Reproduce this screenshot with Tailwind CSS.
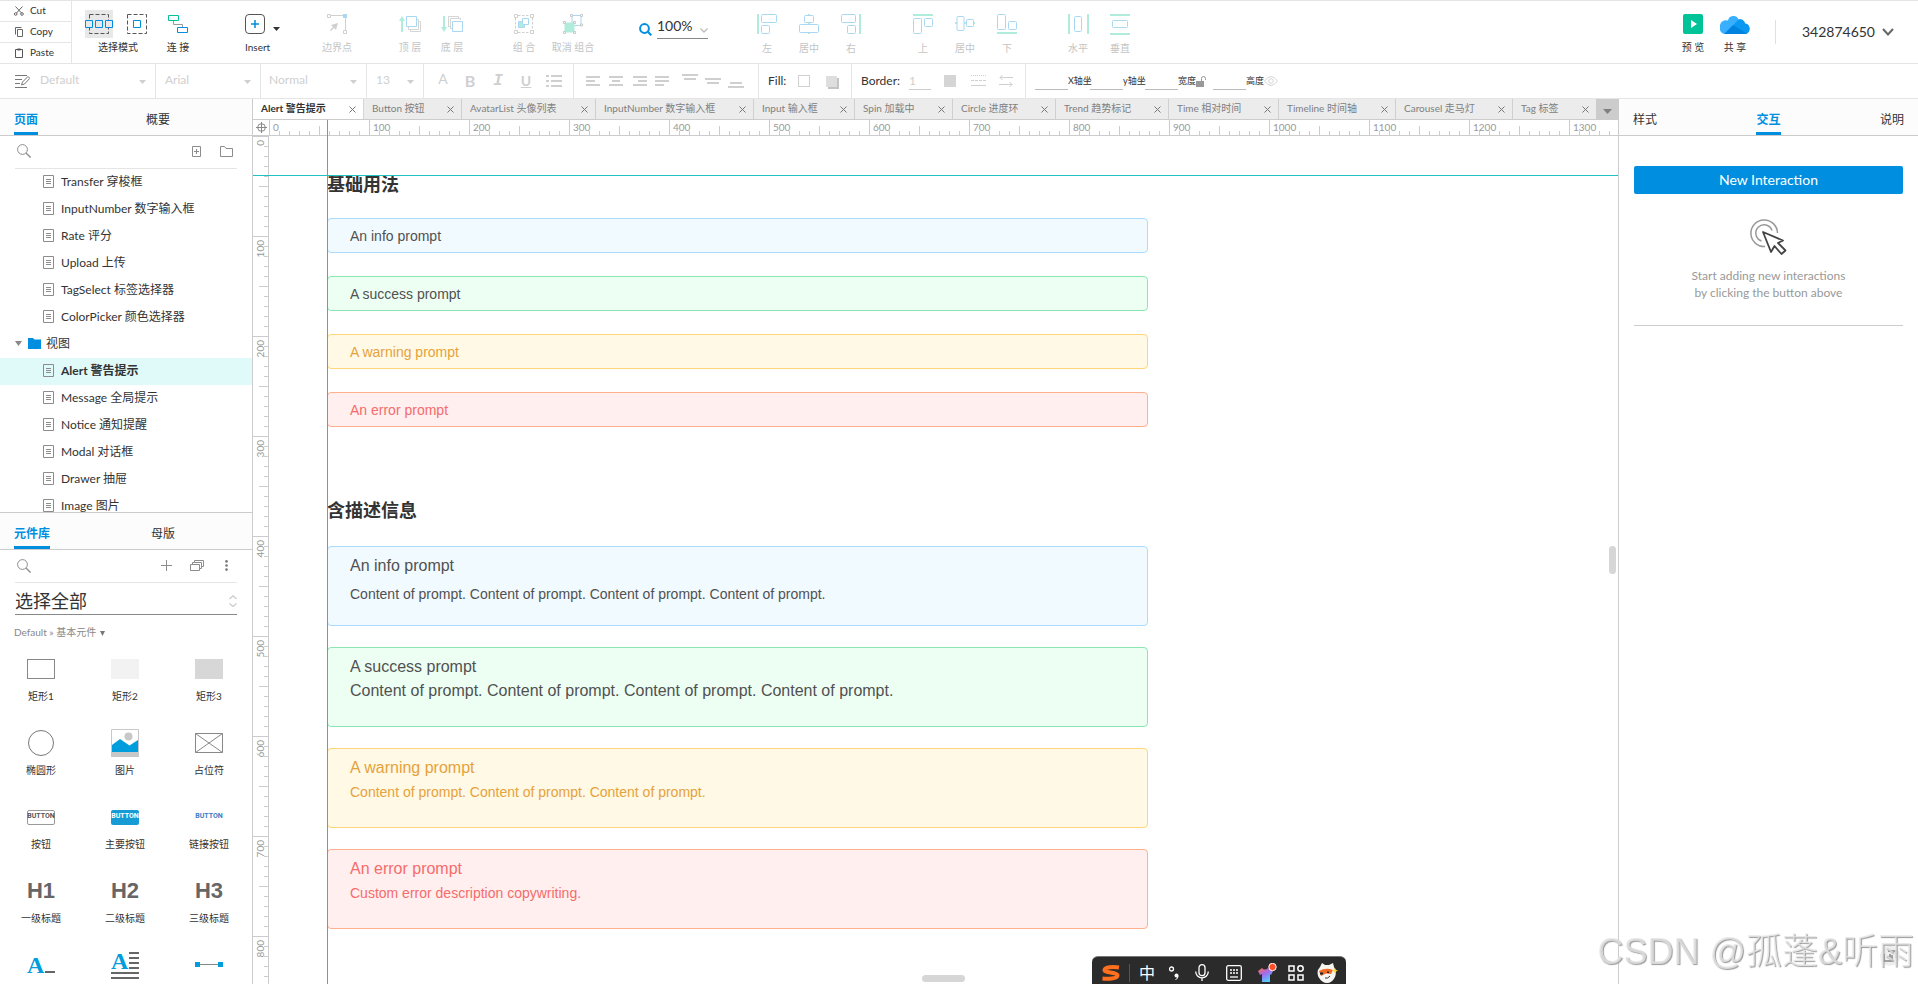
<!DOCTYPE html>
<html lang="zh-CN">
<head>
    <meta charset="UTF-8">
    <meta name="viewport" content="width=device-width, initial-scale=1.0">
    <title>Alert 警告提示</title>
    <script src="https://cdn.jsdelivr.net/npm/@tailwindcss/browser@4"></script>
</head>
<body class="h-screen flex flex-col overflow-hidden bg-white text-[#333] text-xs font-[Lato,'Noto_Sans_CJK_SC',sans-serif]">

    <!-- shared symbols -->
    <svg class="hidden">
        <symbol id="page" viewBox="0 0 11 13"><path d="M.5.5h10v12H.5zM3 4.5h5M3 6.5h5M3 8.5h5" fill="none" stroke="#8c8c8c"/></symbol>
        <symbol id="search" viewBox="0 0 14 14"><circle cx="5.5" cy="5.5" r="4.9" fill="none" stroke="#8c8c8c"/><path d="M9 9l4.6 4.6" stroke="#8c8c8c" stroke-width="1.3"/></symbol>
        <symbol id="close" viewBox="0 0 7 7"><path d="M.5.5l6 6M6.5.5l-6 6" stroke="#777" fill="none"/></symbol>
        <symbol id="caret" viewBox="0 0 7 4"><path d="M0 0h7L3.5 4z" fill="currentColor"/></symbol>
    </svg>

    <!-- top bar -->
    <header class="flex h-16 shrink-0 border-y border-[#e5e5e5] text-[10px] text-[#c4c4c4]">
        <div class="flex w-[72px] shrink-0 flex-col border-r border-[#e5e5e5] text-[#333]">
            <button class="flex h-[21px] items-center gap-1.5 border-b border-[#e5e5e5] pl-[14px]">
                <svg class="size-[10px]" viewBox="0 0 10 10" fill="none" stroke="#666"><path d="M1.5.5l6 6.5M8.5.5l-6 6.5"/><circle cx="1.7" cy="8" r="1.3"/><circle cx="8" cy="8" r="1.3"/></svg>Cut
            </button>
            <button class="flex h-[21px] items-center gap-1.5 border-b border-[#e5e5e5] pl-[14px]">
                <svg class="size-[10px]" viewBox="0 0 10 10" fill="none" stroke="#666"><path d="M3.5 2.5h5v7h-5zM1.5 7.500V.5h6"/></svg>Copy
            </button>
            <button class="flex h-5 items-center gap-1.5 pl-[14px]">
                <svg class="size-[10px]" viewBox="0 0 10 10" fill="none" stroke="#555"><path d="M1.500 1.500h7v8h-7z"/><path d="M3.500 1.500h3" stroke-width="2"/></svg>Paste
            </button>
        </div>

        <div class="ml-[13px] flex w-[66px] shrink-0 flex-col items-center pt-[9px] text-[#333]">
            <div class="flex w-full gap-2.5">
                <button class="grid size-7 place-items-center bg-[#e8e8e8]" aria-label="相交选择">
                    <svg class="h-5 w-7" viewBox="0 0 28 20" fill="none"><path d="M4.500.5h19v19h-19z" stroke="#555" stroke-dasharray="4 2"/><path d="M.5 6.500h7v7h-7zM10.500 6.500h7v7h-7zM20.500 6.500h7v7h-7z" stroke="#008fe0" fill="#e8e8e8"/></svg>
                </button>
                <button class="grid size-7 place-items-center" aria-label="包含选择">
                    <svg class="size-5" viewBox="0 0 20 20" fill="none"><path d="M.5.5h19v19H.5z" stroke="#555" stroke-dasharray="4 2"/><path d="M6.500 6.500h7v7h-7z" stroke="#008fe0"/></svg>
                </button>
            </div>
            <span class="mt-[3px] leading-3">选择模式</span>
        </div>
        <button class="ml-[6px] flex w-[42px] shrink-0 flex-col items-center pt-[9px] text-[#333]">
            <span class="grid h-7 place-items-center"><svg class="h-[19px] w-5" viewBox="0 0 20 19" fill="none"><path d="M5.500 6v3.500h9V12" stroke="#999"/><path d="M.5.5h10v5H.5z" stroke="#00c398"/><path d="M9.500 12.500h10v5h-10z" stroke="#008fe0"/></svg></span>
            <span class="mt-[3px] leading-3">连 接</span>
        </button>

        <button class="ml-[46px] flex w-[34px] shrink-0 flex-col items-start pt-[9px] text-[#333]">
            <span class="flex h-7 items-center gap-2">
                <svg class="size-5" viewBox="0 0 20 20" fill="none"><rect x=".5" y=".5" width="19" height="19" rx="3.500" stroke="#555"/><path d="M10 6v8M6 10h8" stroke="#008fe0" stroke-width="1.500"/></svg>
                <svg class="mt-2.5 h-1 w-[7px]"><use href="#caret"/></svg>
            </span>
            <span class="mt-[3px] leading-3">Insert</span>
        </button>

        <button class="ml-[37px] flex w-[42px] shrink-0 flex-col items-center pt-[9px]" disabled>
            <span class="grid h-7 place-items-center"><svg class="size-5" viewBox="0 0 20 20" fill="none" stroke="#d0d0d0"><path d="M4 1.500h12M18.500 4v12"/><path d="M.5.5h3v3h-3zM16.500 16.500h3v3h-3z"/><path d="M16 0h4v4h-4z" fill="#a9d8f5" stroke="none"/><path d="M11 9l-2 7-2-2-3 3-1-1 3-3-2-2z" fill="#d0d0d0" stroke="none"/></svg></span>
            <span class="mt-[3px] leading-3">边界点</span>
        </button>

        <div class="ml-[31px] flex shrink-0">
            <button class="flex w-[42px] flex-col items-center pt-[9px]" disabled>
                <span class="grid h-7 place-items-center"><svg class="h-[18px] w-[22px]" viewBox="0 0 22 18" fill="none"><path d="M3 17V4" stroke="#b0ecdc" stroke-width="2"/><path d="M0 6l3-5 3 5z" fill="#b0ecdc"/><path d="M11.500 14v2.500h10v-10H20M9.500 12v2.500h10v-10H18" stroke="#d5d5d5"/><path d="M7.500 1.500h10v10h-10z" stroke="#a9d8f5"/></svg></span>
                <span class="mt-[3px] leading-3">顶 层</span>
            </button>
            <button class="flex w-[42px] flex-col items-center pt-[9px]" disabled>
                <span class="grid h-7 place-items-center"><svg class="h-[18px] w-[22px]" viewBox="0 0 22 18" fill="none"><path d="M3 1v13" stroke="#b0ecdc" stroke-width="2"/><path d="M0 12l3 5 3-5z" fill="#b0ecdc"/><path d="M9 11.500H7.500v-10h10V3M11 13.500H9.500v-10h10V5" stroke="#d5d5d5"/><path d="M11.500 6.500h10v10h-10z" stroke="#a9d8f5"/></svg></span>
                <span class="mt-[3px] leading-3">底 层</span>
            </button>
        </div>

        <div class="ml-[30px] flex shrink-0">
            <button class="flex w-[42px] flex-col items-center pt-[9px]" disabled>
                <span class="grid h-7 place-items-center"><svg class="size-5" viewBox="0 0 20 20" fill="none"><path d="M4 1.500h12M4 18.500h12M1.500 4v12M18.500 4v12" stroke="#d0d0d0" stroke-dasharray="2.500 1.500"/><path d="M.5.5h3v3h-3zM16.500.5h3v3h-3zM.5 16.500h3v3h-3zM16.500 16.500h3v3h-3z" stroke="#d0d0d0"/><path d="M4.500 7.500h6v6h-6z" fill="#b0ecdc" stroke="#a9d8f5"/><path d="M8.500 4.500h6v6h-6z" fill="#fff" stroke="#a9d8f5"/></svg></span>
                <span class="mt-[3px] leading-3">组 合</span>
            </button>
            <button class="flex w-[56px] flex-col items-center pt-[9px]" disabled>
                <span class="grid h-7 place-items-center"><svg class="size-5" viewBox="0 0 20 20" fill="none"><path d="M9 1.500h9v10H9z" stroke="#a9d8f5"/><path d="M1.500 8.500h10v10h-10z" fill="#b0ecdc"/><path d="M7.500.5h2v2h-2zM17.500.5h2v2h-2zM17.500 10h2v2h-2zM.5 7.500h2v2h-2zM10.500 7.500h2v2h-2zM.5 17.500h2v2h-2zM10.500 17.500h2v2h-2z" fill="#fff" stroke="#c8c8c8"/></svg></span>
                <span class="mt-[3px] leading-3">取消 组合</span>
            </button>
        </div>

        <label class="ml-[38px] flex shrink-0 items-start gap-[5px] pt-[14px]">
            <svg class="mt-[8px] size-[13px]" viewBox="0 0 13 13" fill="none" stroke="#008fe0" stroke-width="2"><circle cx="5.500" cy="5.500" r="4.400"/><path d="M8.800 8.800l3.500 3.500"/></svg>
            <span class="flex w-[51px] items-center border-b border-[#888]">
                <input class="h-[23px] w-[43px] pb-0.5 text-sm text-[#333] outline-none" value="100%" aria-label="缩放">
                <svg class="mt-2 h-[5px] w-2" viewBox="0 0 8 5" fill="none" stroke="#bbb" stroke-width="1.300"><path d="M.5.5L4 4 7.500.5"/></svg>
            </span>
        </label>

        <div class="ml-[38px] flex shrink-0">
            <button class="flex w-[42px] flex-col items-center pt-[9px]" disabled>
                <span class="grid h-7 place-items-center"><svg class="size-5" viewBox="0 0 20 20" fill="none" stroke="#a9d8f5"><path d="M1 0v20" stroke="#b0ecdc" stroke-width="2"/><rect x="4.500" y=".5" width="15" height="8" rx="1"/><rect x="4.500" y="11.500" width="8" height="8" rx="1"/></svg></span>
                <span class="mt-1 leading-3">左</span>
            </button>
            <button class="flex w-[42px] flex-col items-center pt-[9px]" disabled>
                <span class="grid h-7 place-items-center"><svg class="size-5" viewBox="0 0 20 20" fill="none" stroke="#a9d8f5"><path d="M10-1v3M10 8v3M10 18v3" stroke="#b0ecdc" stroke-width="2"/><rect x="5.500" y="1.500" width="9" height="7" rx="1"/><rect x=".5" y="10.500" width="19" height="8" rx="1"/></svg></span>
                <span class="mt-1 leading-3">居中</span>
            </button>
            <button class="flex w-[42px] flex-col items-center pt-[9px]" disabled>
                <span class="grid h-7 place-items-center"><svg class="size-5" viewBox="0 0 20 20" fill="none" stroke="#a9d8f5"><path d="M19 0v20" stroke="#b0ecdc" stroke-width="2"/><rect x=".5" y=".5" width="14" height="8" rx="1"/><rect x="6.500" y="11.500" width="8" height="8" rx="1"/></svg></span>
                <span class="mt-1 leading-3">右</span>
            </button>
        </div>
        <div class="ml-[30px] flex shrink-0">
            <button class="flex w-[42px] flex-col items-center pt-[9px]" disabled>
                <span class="grid h-7 place-items-center"><svg class="size-5" viewBox="0 0 20 20" fill="none" stroke="#a9d8f5"><path d="M0 1h20" stroke="#b0ecdc" stroke-width="2"/><rect x=".5" y="4.500" width="8" height="15" rx="1"/><rect x="11.500" y="4.500" width="8" height="8" rx="1"/></svg></span>
                <span class="mt-1 leading-3">上</span>
            </button>
            <button class="flex w-[42px] flex-col items-center pt-[9px]" disabled>
                <span class="grid h-7 place-items-center"><svg class="size-5" viewBox="0 0 20 20" fill="none" stroke="#a9d8f5"><path d="M-1 9h3M9 9h3M18 9h3" stroke="#b0ecdc" stroke-width="2"/><rect x="2" y="2.500" width="7" height="14" rx="1"/><rect x="11.500" y="5.500" width="7" height="7" rx="1"/></svg></span>
                <span class="mt-1 leading-3">居中</span>
            </button>
            <button class="flex w-[42px] flex-col items-center pt-[9px]" disabled>
                <span class="grid h-7 place-items-center"><svg class="size-5" viewBox="0 0 20 20" fill="none" stroke="#a9d8f5"><path d="M0 19h20" stroke="#b0ecdc" stroke-width="2"/><rect x=".5" y=".5" width="8" height="15" rx="1"/><rect x="11.500" y="7.500" width="8" height="8" rx="1"/></svg></span>
                <span class="mt-1 leading-3">下</span>
            </button>
        </div>
        <div class="ml-[29px] flex shrink-0">
            <button class="flex w-[42px] flex-col items-center pt-[9px]" disabled>
                <span class="grid h-7 place-items-center"><svg class="h-5 w-[21px]" viewBox="0 0 21 20" fill="none" stroke="#a9d8f5"><path d="M1 0v20M20 0v20" stroke="#b0ecdc" stroke-width="2"/><rect x="6.500" y="2.500" width="7" height="15" rx="1"/></svg></span>
                <span class="mt-1 leading-3">水平</span>
            </button>
            <button class="flex w-[42px] flex-col items-center pt-[9px]" disabled>
                <span class="grid h-7 place-items-center"><svg class="h-[21px] w-5" viewBox="0 0 20 21" fill="none" stroke="#a9d8f5"><path d="M0 1h20M0 20h20" stroke="#b0ecdc" stroke-width="2"/><rect x="2.500" y="6.500" width="15" height="7" rx="1"/></svg></span>
                <span class="mt-1 leading-3">垂直</span>
            </button>
        </div>

        <div class="ml-auto flex shrink-0 text-[#333]">
            <button class="flex w-[42px] flex-col items-center pt-[9px]">
                <span class="grid h-7 place-items-center"><svg class="size-5" viewBox="0 0 20 20"><rect width="20" height="20" rx="2" fill="#00c398"/><path d="M8 6l6 4-6 4z" fill="#fff"/></svg></span>
                <span class="mt-[3px] leading-3">预 览</span>
            </button>
            <button class="flex w-[42px] flex-col items-center pt-[9px]">
                <span class="grid h-7 place-items-center"><svg class="h-[19px] w-[30px]" viewBox="0 0 30 19"><path d="M5 19a5.500 5.500 0 0 1-5-7A6 6 0 0 1 8 5.500 5.500 5.500 0 0 1 18.500 4.500a5 5 0 0 1 6.500 4A5.300 5.300 0 0 1 25 19z" fill="#38b0ff"/><path d="M13 10.500L18.500 4.500a5 5 0 0 1 6.500 4A5.300 5.300 0 0 1 25 19z" fill="#0a98f0"/><path d="M13 10l14 8.500-2 .5H4z" fill="#0083e0"/></svg></span>
                <span class="mt-[3px] leading-3">共 享</span>
            </button>
            <div class="ml-[19px] mt-[19px] h-6 border-l border-[#e0e0e0]"></div>
            <button class="ml-[26px] mr-6 flex h-[62px] items-center gap-[7px] text-sm">
                342874650
                <svg class="h-2 w-3" viewBox="0 0 12 8" fill="none" stroke="#666" stroke-width="2"><path d="M1 1l5 5.500L11 1"/></svg>
            </button>
        </div>
    </header>

    <!-- format bar -->
    <div class="flex h-[35px] shrink-0 border-b border-[#e5e5e5] text-[#cfcfcf]">
        <label class="flex w-[156px] shrink-0 items-center border-r border-[#e5e5e5] pl-[15px] pr-[9px]">
            <svg class="mr-[10px] h-[14px] w-[15px] shrink-0" viewBox="0 0 15 14" fill="none" stroke="#777"><path d="M0 1.500h12M0 5.500h7M0 9.500h5M0 13.500h12"/><path d="M6.500 11l1-3L13 2.500l1.800 1.800L9.500 10z"/></svg>
            <select class="min-w-0 flex-1 appearance-none pb-0.5 outline-none" aria-label="样式"><option>Default</option></select>
            <svg class="mt-0.5 h-1 w-[7px]"><use href="#caret"/></svg>
        </label>
        <label class="flex w-[105px] shrink-0 items-center border-r border-[#e5e5e5] px-[9px]">
            <select class="min-w-0 flex-1 appearance-none pb-0.5 outline-none" aria-label="字体"><option>Arial</option></select>
            <svg class="mt-0.5 h-1 w-[7px]"><use href="#caret"/></svg>
        </label>
        <label class="flex w-[106px] shrink-0 items-center border-r border-[#e5e5e5] pl-2 pr-[9px]">
            <select class="min-w-0 flex-1 appearance-none pb-0.5 outline-none" aria-label="字重"><option>Normal</option></select>
            <svg class="mt-0.5 h-1 w-[7px]"><use href="#caret"/></svg>
        </label>
        <label class="flex w-[57px] shrink-0 items-center border-r border-[#e5e5e5] px-[9px]">
            <select class="min-w-0 flex-1 appearance-none pb-0.5 outline-none" aria-label="字号"><option>13</option></select>
            <svg class="mt-0.5 h-1 w-[7px]"><use href="#caret"/></svg>
        </label>
        <div class="flex w-[150px] shrink-0 items-center border-r border-[#e5e5e5] pl-[13px] text-sm">
            <button class="w-3 pb-1" disabled>A</button>
            <button class="ml-[15px] w-3 text-base font-bold" disabled>B</button>
            <button class="ml-4 w-3 font-mono text-base font-bold italic" disabled>I</button>
            <button class="ml-4 w-3 font-bold underline" disabled>U</button>
            <button class="ml-[14px]" aria-label="列表" disabled><svg class="h-3 w-4" viewBox="0 0 16 12" stroke="currentColor" stroke-width="2"><path d="M0 1h3M5 1h11M0 6h3M5 6h11M0 11h3M5 11h11"/></svg></button>
        </div>
        <div class="flex w-[185px] shrink-0 items-center border-r border-[#e5e5e5] pl-3">
            <button aria-label="左对齐" disabled><svg class="h-[10px] w-[14px]" viewBox="0 0 14 10" stroke="currentColor" stroke-width="2"><path d="M0 1h14M0 5h9M0 9h14"/></svg></button>
            <button class="ml-[9px]" aria-label="居中对齐" disabled><svg class="h-[10px] w-[14px]" viewBox="0 0 14 10" stroke="currentColor" stroke-width="2"><path d="M0 1h14M3 5h8M0 9h14"/></svg></button>
            <button class="ml-[10px]" aria-label="右对齐" disabled><svg class="h-[10px] w-[14px]" viewBox="0 0 14 10" stroke="currentColor" stroke-width="2"><path d="M0 1h14M5 5h9M0 9h14"/></svg></button>
            <button class="ml-2" aria-label="两端对齐" disabled><svg class="h-[10px] w-[14px]" viewBox="0 0 14 10" stroke="currentColor" stroke-width="2"><path d="M0 1h14M0 5h14M0 9h9"/></svg></button>
            <button class="ml-[13px]" aria-label="顶部" disabled><svg class="h-[14px] w-4" viewBox="0 0 16 14" stroke="currentColor" stroke-width="2"><path d="M0 1h16M2 5h12"/></svg></button>
            <button class="ml-[7px]" aria-label="中部" disabled><svg class="h-[14px] w-4" viewBox="0 0 16 14" stroke="currentColor" stroke-width="2"><path d="M0 5h16M2 9h12"/></svg></button>
            <button class="ml-[7px]" aria-label="底部" disabled><svg class="h-[14px] w-4" viewBox="0 0 16 14" stroke="currentColor" stroke-width="2"><path d="M2 9h12M0 13h16"/></svg></button>
        </div>
        <div class="flex w-[93px] shrink-0 items-center border-r border-[#e5e5e5] pl-[9px]">
            <span class="w-[30px] text-[#333]">Fill:</span>
            <button class="size-3 border border-[#d0d0d0]" aria-label="填充颜色"></button>
            <button class="ml-4 size-[11px] bg-[#dedede] shadow-[2px_2px_0_#c4c4c4]" aria-label="阴影"></button>
        </div>
        <div class="flex w-[174px] shrink-0 items-center border-r border-[#e5e5e5] pl-[9px]">
            <label for="border-width" class="w-12 text-[#333]">Border:</label>
            <input id="border-width" class="h-[18px] w-[22px] border-b border-[#ccc] outline-none" value="1">
            <button class="ml-[13px] size-3 bg-[#d5d5d5]" aria-label="边框颜色"></button>
            <button class="ml-[15px]" aria-label="线段样式" disabled><svg class="h-3 w-[15px]" viewBox="0 0 15 12" stroke="currentColor"><path d="M0 .5h15" stroke-dasharray="1 1"/><path d="M0 5.500h15" stroke-dasharray="3 1"/><path d="M0 10.500h15"/></svg></button>
            <button class="ml-[13px]" aria-label="箭头样式" disabled><svg class="h-3 w-[14px]" viewBox="0 0 14 12" fill="none" stroke="currentColor"><path d="M14 2.500H1M3.500 0L1 2.500 3.500 5M0 9.500h13M10.500 7L13 9.500 10.500 12"/></svg></button>
        </div>
        <div class="flex shrink-0 items-center pl-[9px] text-[9px] text-[#333]">
            <label class="flex w-[55px] items-center"><input class="h-[18px] w-[33px] shrink-0 border-b border-[#bbb] outline-none"><span class="whitespace-nowrap">X轴坐</span></label>
            <label class="flex w-[55px] items-center"><input class="h-[18px] w-[33px] shrink-0 border-b border-[#bbb] outline-none"><span class="whitespace-nowrap">y轴坐</span></label>
            <label class="flex w-[51px] items-center"><input class="h-[18px] w-[33px] shrink-0 border-b border-[#bbb] outline-none">宽度</label>
            <button aria-label="锁定比例"><svg class="h-[11px] w-[10px]" viewBox="0 0 10 11"><path d="M0 5h8v6H0z" fill="#999"/><path d="M5.500 5V2.500a2 2 0 0 1 4 0V4" fill="none" stroke="#999"/></svg></button>
            <label class="ml-[7px] flex w-[51px] items-center"><input class="h-[18px] w-[33px] shrink-0 border-b border-[#bbb] outline-none">高度</label>
            <button aria-label="可见性"><svg class="h-[10px] w-[14px]" viewBox="0 0 14 10" fill="none" stroke="#d5d5d5"><path d="M.5 5Q7-4 13.500 5 7 14 .5 5z"/><circle cx="7" cy="5" r="2.300"/></svg></button>
        </div>
    </div>

    <div class="flex min-h-0 flex-1">
        <!-- left panel -->
        <aside class="flex w-[253px] shrink-0 flex-col border-r border-[#ccc]">
            <div class="flex h-[37px] shrink-0 border-b border-[#ccc] bg-[#fcfcfc] pl-[14px]">
                <button class="flex items-center border-b-[3px] border-[#008fe0] pt-2 font-bold text-[#008fe0]">页面</button>
                <button class="ml-[108px] flex items-center border-b-[3px] border-transparent pt-2">概要</button>
            </div>
            <div class="mx-[15px] flex h-[33px] shrink-0 items-center border-b border-[#e5e5e5] pb-0.5 pl-0.5 pr-1">
                <button aria-label="搜索页面"><svg class="size-[14px]"><use href="#search"/></svg></button>
                <button class="ml-auto" aria-label="添加页面"><svg class="h-[11px] w-[9px]" viewBox="0 0 9 11" fill="none" stroke="#8c8c8c"><path d="M.5.5h8v10h-8zM2 5.500h5M4.500 3v5"/></svg></button>
                <button class="ml-[19px]" aria-label="添加文件夹"><svg class="h-[11px] w-[13px]" viewBox="0 0 13 11" fill="none" stroke="#8c8c8c"><path d="M.5 10.500V.5h4l1.500 2h6.500v8z"/></svg></button>
            </div>
            <div id="pages" class="h-[343px] shrink-0 overflow-hidden">
                <a href="#" class="flex h-[27px] items-center gap-[7px] pb-0.5 pl-[43px]"><svg class="h-[13px] w-[11px]"><use href="#page"/></svg>Transfer 穿梭框</a>
                <a href="#" class="flex h-[27px] items-center gap-[7px] pb-0.5 pl-[43px]"><svg class="h-[13px] w-[11px]"><use href="#page"/></svg>InputNumber 数字输入框</a>
                <a href="#" class="flex h-[27px] items-center gap-[7px] pb-0.5 pl-[43px]"><svg class="h-[13px] w-[11px]"><use href="#page"/></svg>Rate 评分</a>
                <a href="#" class="flex h-[27px] items-center gap-[7px] pb-0.5 pl-[43px]"><svg class="h-[13px] w-[11px]"><use href="#page"/></svg>Upload 上传</a>
                <a href="#" class="flex h-[27px] items-center gap-[7px] pb-0.5 pl-[43px]"><svg class="h-[13px] w-[11px]"><use href="#page"/></svg>TagSelect 标签选择器</a>
                <a href="#" class="flex h-[27px] items-center gap-[7px] pb-0.5 pl-[43px]"><svg class="h-[13px] w-[11px]"><use href="#page"/></svg>ColorPicker 颜色选择器</a>
                <a href="#" class="flex h-[27px] items-center pb-0.5 pl-[15px]">
                    <svg class="h-[5px] w-[7px] text-[#888]" viewBox="0 0 7 5"><path d="M0 0h7L3.500 5z" fill="currentColor"/></svg>
                    <svg class="ml-1.5 mr-[5px] h-[11px] w-[13px]" viewBox="0 0 13 11"><path d="M0 0h5l1.500 1.500H13V11H0z" fill="#008fe0"/></svg>视图
                </a>
                <a href="#" class="flex h-[27px] items-center gap-[7px] bg-[#e0fafa] pb-0.5 pl-[43px] font-bold"><svg class="h-[13px] w-[11px]"><use href="#page"/></svg>Alert 警告提示</a>
                <a href="#" class="flex h-[27px] items-center gap-[7px] pb-0.5 pl-[43px]"><svg class="h-[13px] w-[11px]"><use href="#page"/></svg>Message 全局提示</a>
                <a href="#" class="flex h-[27px] items-center gap-[7px] pb-0.5 pl-[43px]"><svg class="h-[13px] w-[11px]"><use href="#page"/></svg>Notice 通知提醒</a>
                <a href="#" class="flex h-[27px] items-center gap-[7px] pb-0.5 pl-[43px]"><svg class="h-[13px] w-[11px]"><use href="#page"/></svg>Modal 对话框</a>
                <a href="#" class="flex h-[27px] items-center gap-[7px] pb-0.5 pl-[43px]"><svg class="h-[13px] w-[11px]"><use href="#page"/></svg>Drawer 抽屉</a>
                <a href="#" class="flex h-[27px] items-center gap-[7px] pb-0.5 pl-[43px]"><svg class="h-[13px] w-[11px]"><use href="#page"/></svg>Image 图片</a>
            </div>

            <div class="flex h-[38px] shrink-0 border-y border-[#ccc] bg-[#fcfcfc] pl-[14px]">
                <button class="flex items-center border-b-[3px] border-[#008fe0] pt-2 font-bold text-[#008fe0]">元件库</button>
                <button class="ml-[101px] flex items-center border-b-[3px] border-transparent pt-2">母版</button>
            </div>
            <div class="mx-[15px] flex h-[33px] shrink-0 items-center border-b border-[#e5e5e5] pb-px pl-0.5 pr-2">
                <button aria-label="搜索元件"><svg class="size-[14px]"><use href="#search"/></svg></button>
                <button class="ml-auto" aria-label="添加"><svg class="size-[11px]" viewBox="0 0 11 11" stroke="#8c8c8c"><path d="M5.500 0v11M0 5.500h11"/></svg></button>
                <button class="ml-[18px]" aria-label="管理"><svg class="h-[11px] w-[14px]" viewBox="0 0 14 11" fill="none" stroke="#8c8c8c"><path d="M.5 4.500h9v6h-9zM2.500 4V2.500h9v6H10M4.500 2V.5h9v6H12"/></svg></button>
                <button class="ml-5" aria-label="更多"><svg class="h-[11px] w-[5px]" viewBox="0 0 5 11" fill="#777"><circle cx="2.500" cy="1.400" r="1.300"/><circle cx="2.500" cy="5.500" r="1.300"/><circle cx="2.500" cy="9.600" r="1.300"/></svg></button>
            </div>
            <label class="mx-[15px] mt-1 flex h-7 shrink-0 items-center border-b border-[#888]">
                <select class="flex-1 appearance-none text-lg leading-6 outline-none" aria-label="元件库"><option>选择全部</option></select>
                <svg class="h-3 w-2" viewBox="0 0 8 12" fill="none" stroke="#ccc" stroke-width="1.300"><path d="M.5 4L4 .8 7.500 4M.5 8.500L4 11.500 7.500 8.500"/></svg>
            </label>
            <button class="mt-2.5 flex h-4 shrink-0 items-center gap-1 pl-[14px] text-[10px] text-[#888]">Default » 基本元件 <svg class="h-[5px] w-[5px]" viewBox="0 0 5 5"><path d="M0 0h5L2.500 5z" fill="#777"/></svg></button>

            <div class="mt-[14px] grid min-h-0 flex-1 auto-rows-[48px] grid-cols-[82px_86px_82px] gap-y-[26px] overflow-hidden text-[10px]">
                <figure class="flex flex-col items-center">
                    <div class="grid h-7 place-items-center"><div class="h-5 w-7 border border-[#888]"></div></div>
                    <figcaption class="mt-1.5 leading-[14px]">矩形1</figcaption>
                </figure>
                <figure class="flex flex-col items-center">
                    <div class="grid h-7 place-items-center"><div class="h-5 w-7 bg-[#f2f2f2]"></div></div>
                    <figcaption class="mt-1.5 leading-[14px]">矩形2</figcaption>
                </figure>
                <figure class="flex flex-col items-center">
                    <div class="grid h-7 place-items-center"><div class="h-5 w-7 bg-[#d7d7d7]"></div></div>
                    <figcaption class="mt-1.5 leading-[14px]">矩形3</figcaption>
                </figure>
                <figure class="flex flex-col items-center">
                    <div class="grid h-7 place-items-center"><div class="size-[26px] rounded-full border border-[#777]"></div></div>
                    <figcaption class="mt-1.5 leading-[14px]">椭圆形</figcaption>
                </figure>
                <figure class="flex flex-col items-center">
                    <svg class="size-7" viewBox="0 0 28 28"><path d="M.5.5h27v27H.5z" fill="#fff" stroke="#c8c8c8"/><circle cx="17.500" cy="7.500" r="4" fill="#c8c8c8"/><path d="M1 23V16l8-6 9.500 6.500L27 11v12z" fill="#009ddc"/><path d="M0 23h28v5H0z" fill="#c8c8c8"/></svg>
                    <figcaption class="mt-1.5 leading-[14px]">图片</figcaption>
                </figure>
                <figure class="flex flex-col items-center">
                    <div class="grid h-7 place-items-center"><svg class="h-5 w-7" viewBox="0 0 28 20" fill="none" stroke="#888"><path d="M.5.5h27v19H.5zM.5.5l27 19M27.500.5l-27 19"/></svg></div>
                    <figcaption class="mt-1.5 leading-[14px]">占位符</figcaption>
                </figure>
                <figure class="flex flex-col items-center">
                    <div class="grid h-7 place-items-center"><div class="flex h-[15px] w-7 items-center justify-center rounded-xs border border-[#999] font-[Roboto] text-[7px] font-bold text-[#555]">BUTTON</div></div>
                    <figcaption class="mt-1.5 leading-[14px]">按钮</figcaption>
                </figure>
                <figure class="flex flex-col items-center">
                    <div class="grid h-7 place-items-center"><div class="flex h-[15px] w-7 items-center justify-center rounded-xs bg-[#169bd5] font-[Roboto] text-[7px] font-bold text-white">BUTTON</div></div>
                    <figcaption class="mt-1.5 leading-[14px]">主要按钮</figcaption>
                </figure>
                <figure class="flex flex-col items-center">
                    <div class="grid h-7 place-items-center"><div class="flex h-[15px] w-7 items-center justify-center font-[Roboto] text-[7px] font-bold text-[#3a7cc4]">BUTTON</div></div>
                    <figcaption class="mt-1.5 leading-[14px]">链接按钮</figcaption>
                </figure>
                <figure class="flex flex-col items-center">
                    <div class="font-[Liberation_Sans] text-[22px] font-bold leading-7 text-[#666]">H1</div>
                    <figcaption class="mt-1.5 leading-[14px]">一级标题</figcaption>
                </figure>
                <figure class="flex flex-col items-center">
                    <div class="font-[Liberation_Sans] text-[22px] font-bold leading-7 text-[#666]">H2</div>
                    <figcaption class="mt-1.5 leading-[14px]">二级标题</figcaption>
                </figure>
                <figure class="flex flex-col items-center">
                    <div class="font-[Liberation_Sans] text-[22px] font-bold leading-7 text-[#666]">H3</div>
                    <figcaption class="mt-1.5 leading-[14px]">三级标题</figcaption>
                </figure>
                <figure class="flex flex-col items-center">
                    <svg class="size-7" viewBox="0 0 28 28"><text x="0" y="22" font-family="Liberation Serif" font-size="24" font-weight="bold" fill="#009ddc">A</text><path d="M18 21h10" stroke="#666" stroke-width="2"/></svg>
                </figure>
                <figure class="flex flex-col items-center">
                    <svg class="size-7" viewBox="0 0 28 28"><text x="0" y="18" font-family="Liberation Serif" font-size="24" font-weight="bold" fill="#009ddc">A</text><path d="M18 2h10M18 7h10M18 12h10M18 17h10M0 22h28M0 27h28" stroke="#666" stroke-width="2"/></svg>
                </figure>
                <figure class="flex flex-col items-center">
                    <svg class="size-7" viewBox="0 0 28 28"><path d="M3 13.500h22" stroke="#888"/><path d="M0 11h5v5H0zM23 11h5v5h-5z" fill="#009ddc"/></svg>
                </figure>
            </div>
        </aside>

        <!-- canvas -->
        <main class="relative flex min-w-0 flex-1 flex-col overflow-hidden">
            <nav class="flex h-[21px] shrink-0 border-b border-[#ccc] bg-[#ececec] text-[10px] text-[#808080]">
                <div class="flex w-[111px] items-center justify-between border-r border-[#d5d5d5] bg-white pl-2 pr-[7px] font-bold text-[#333]">Alert 警告提示<button aria-label="关闭"><svg class="size-[7px]"><use href="#close"/></svg></button></div>
                <div class="flex w-[98px] items-center justify-between border-r border-[#d0d0d0] pl-2 pr-[7px]">Button 按钮<button aria-label="关闭"><svg class="size-[7px]"><use href="#close"/></svg></button></div>
                <div class="flex w-[134px] items-center justify-between border-r border-[#d0d0d0] pl-2 pr-[7px]">AvatarList 头像列表<button aria-label="关闭"><svg class="size-[7px]"><use href="#close"/></svg></button></div>
                <div class="flex w-[158px] items-center justify-between border-r border-[#d0d0d0] pl-2 pr-[7px]">InputNumber 数字输入框<button aria-label="关闭"><svg class="size-[7px]"><use href="#close"/></svg></button></div>
                <div class="flex w-[101px] items-center justify-between border-r border-[#d0d0d0] pl-2 pr-[7px]">Input 输入框<button aria-label="关闭"><svg class="size-[7px]"><use href="#close"/></svg></button></div>
                <div class="flex w-[98px] items-center justify-between border-r border-[#d0d0d0] pl-2 pr-[7px]">Spin 加载中<button aria-label="关闭"><svg class="size-[7px]"><use href="#close"/></svg></button></div>
                <div class="flex w-[103px] items-center justify-between border-r border-[#d0d0d0] pl-2 pr-[7px]">Circle 进度环<button aria-label="关闭"><svg class="size-[7px]"><use href="#close"/></svg></button></div>
                <div class="flex w-[113px] items-center justify-between border-r border-[#d0d0d0] pl-2 pr-[7px]">Trend 趋势标记<button aria-label="关闭"><svg class="size-[7px]"><use href="#close"/></svg></button></div>
                <div class="flex w-[110px] items-center justify-between border-r border-[#d0d0d0] pl-2 pr-[7px]">Time 相对时间<button aria-label="关闭"><svg class="size-[7px]"><use href="#close"/></svg></button></div>
                <div class="flex w-[117px] items-center justify-between border-r border-[#d0d0d0] pl-2 pr-[7px]">Timeline 时间轴<button aria-label="关闭"><svg class="size-[7px]"><use href="#close"/></svg></button></div>
                <div class="flex w-[117px] items-center justify-between border-r border-[#d0d0d0] pl-2 pr-[7px]">Carousel 走马灯<button aria-label="关闭"><svg class="size-[7px]"><use href="#close"/></svg></button></div>
                <div class="flex w-[83px] items-center justify-between pl-2 pr-[7px]">Tag 标签<button aria-label="关闭"><svg class="size-[7px]"><use href="#close"/></svg></button></div>
                <button class="grid flex-1 place-items-center bg-[#ccc]" aria-label="所有标签"><svg class="mt-1 h-[5px] w-[9px]" viewBox="0 0 9 5"><path d="M0 0h9L4.500 5z" fill="#808080"/></svg></button>
            </nav>
            <div class="flex h-4 shrink-0 border-b border-[#ccc]">
                <button class="grid w-4 shrink-0 place-items-center" aria-label="原点"><svg class="size-[11px]" viewBox="0 0 11 11" fill="none" stroke="#888"><circle cx="5.500" cy="5.500" r="3.800"/><path d="M5.500 0v11M0 5.500h11"/></svg></button>
                <div id="ruler-x" class="flex min-w-0 flex-1 overflow-hidden text-[10px] text-[#999]"></div>
            </div>
            <div class="flex min-h-0 flex-1">
                <div id="ruler-y" class="w-4 shrink-0 overflow-hidden border-r border-[#ccc] text-[10px] text-[#999]"></div>
                <div class="min-w-0 flex-1 overflow-hidden pl-[58px] pt-9 font-[Liberation_Sans,'Noto_Sans_CJK_SC',sans-serif] text-sm text-[#515151]">
                    <h2 class="text-lg font-bold leading-[27px] text-[#333]">基础用法</h2>
                    <div class="mt-[19px] flex w-[821px] flex-col gap-[23px]">
                        <p class="flex h-[35px] items-center rounded-sm border border-[#abdcff] bg-[#f0faff] pl-[22px]">An info prompt</p>
                        <p class="flex h-[35px] items-center rounded-sm border border-[#8ce6b0] bg-[#edfff3] pl-[22px]">A success prompt</p>
                        <p class="flex h-[35px] items-center rounded-sm border border-[#ffd77a] bg-[#fff9e6] pl-[22px] text-[#e6a23c]">A warning prompt</p>
                        <p class="flex h-[35px] items-center rounded-sm border border-[#ffb08f] bg-[#ffefef] pl-[22px] text-[#f56c6c]">An error prompt</p>
                    </div>
                    <h2 class="mt-[71px] text-lg font-bold leading-[27px] text-[#333]">含描述信息</h2>
                    <div class="mt-[21px] flex w-[821px] flex-col gap-[21px] leading-6">
                        <div class="h-20 rounded-sm border border-[#abdcff] bg-[#f0faff] pl-[22px] pt-[7px]">
                            <h3 class="text-base">An info prompt</h3>
                            <p class="mt-1">Content of prompt. Content of prompt. Content of prompt. Content of prompt.</p>
                        </div>
                        <div class="h-20 rounded-sm border border-[#8ce6b0] bg-[#edfff3] pl-[22px] pt-[7px]">
                            <h3 class="text-base">A success prompt</h3>
                            <p class="text-base">Content of prompt. Content of prompt. Content of prompt. Content of prompt.</p>
                        </div>
                        <div class="h-20 rounded-sm border border-[#ffd77a] bg-[#fff9e6] pl-[22px] pt-[7px] text-[#e6a23c]">
                            <h3 class="text-base">A warning prompt</h3>
                            <p>Content of prompt. Content of prompt. Content of prompt.</p>
                        </div>
                        <div class="h-20 rounded-sm border border-[#ffb08f] bg-[#ffefef] pl-[22px] pt-[7px] text-[#f56c6c]">
                            <h3 class="text-base">An error prompt</h3>
                            <p>Custom error description copywriting.</p>
                        </div>
                    </div>
                </div>
            </div>
            <!-- guides and scroll thumbs -->
            <div class="absolute inset-x-0 top-[76px] h-px bg-[#22bfc4]"></div>
            <div class="absolute bottom-0 left-[74px] top-[21px] w-px bg-[#22bfc4]"></div>
            <div class="absolute right-0.5 top-[447px] h-7 w-[7px] rounded-full bg-[#d6d6d6]"></div>
            <div class="absolute bottom-0.5 left-[669px] h-[7px] w-[43px] rounded-sm bg-[#d6d6d6]"></div>
        </main>

        <!-- right panel -->
        <aside class="flex w-[300px] shrink-0 flex-col border-l border-[#ccc]">
            <div class="flex h-[37px] shrink-0 justify-between border-b border-[#ccc] bg-[#fcfcfc] px-[14px]">
                <button class="flex items-center border-b-[3px] border-transparent pt-2">样式</button>
                <button class="flex items-center border-b-[3px] border-[#008fe0] pt-2 font-bold text-[#008fe0]">交互</button>
                <button class="flex items-center border-b-[3px] border-transparent pt-2">说明</button>
            </div>
            <div class="mx-[15px] flex flex-col items-center border-b border-[#ccc] pb-6 pt-[30px]">
                <button class="h-7 w-full rounded-xs bg-[#008fe0] text-sm text-white">New Interaction</button>
                <svg class="mt-[25px] h-9 w-[37px]" viewBox="0 0 37 36" fill="none" stroke="#999" stroke-width="1.500"><path d="M15 27.500A13.300 13.300 0 1 1 27.500 14"/><path d="M11.500 22A8.300 8.300 0 1 1 22 11.500"/><path d="M13 13l8 20 3.500-6 7 8 4-3.500-7.500-7.500 5-2.500z" fill="#fff" stroke="#444" stroke-width="1.800" stroke-linejoin="round"/></svg>
                <p class="mt-3 text-center leading-[17px] text-[#999]">Start adding new interactions<br>by clicking the button above</p>
            </div>
        </aside>
    </div>

    <!-- input method bar -->
    <div class="fixed bottom-0 left-[1092px] flex h-7 w-[254px] items-center rounded-t-md border-t border-[#777] bg-[#2b2b2b] pl-[10px] pt-1">
        <svg class="h-4 w-[18px]" viewBox="0 0 18 16" fill="none" stroke="#ff6f1e" stroke-width="4"><path d="M17 2.500C11 1.500 3 2 2.500 5s13 2 13 5.500S5 14 .5 13.500"/></svg>
        <div class="ml-[9px] h-[18px] border-l border-[#555]"></div>
        <button class="ml-[9px] text-base leading-5 text-white">中</button>
        <svg class="ml-[14px] h-[14px] w-[10px]" viewBox="0 0 10 14" fill="none"><circle cx="2.500" cy="3" r="2" stroke="#fff" stroke-width="1.300"/><circle cx="7.500" cy="9.500" r="2" fill="#fff"/><path d="M9 10q0 3-2.500 3.500" stroke="#fff"/></svg>
        <svg class="ml-4 h-[17px] w-[14px]" viewBox="0 0 14 17" fill="none" stroke="#fff" stroke-width="1.300"><rect x="4" y=".7" width="6" height="11" rx="3"/><path d="M.7 7.500a6.300 6.300 0 0 0 12.600 0M7 14v3"/></svg>
        <svg class="ml-[17px] size-4" viewBox="0 0 16 16" fill="none" stroke="#fff" stroke-width="1.300"><rect x=".7" y=".7" width="14.600" height="14.600" rx="1.500"/><path d="M4 5h8M4 8h8" stroke-dasharray="2 1"/><path d="M4 12h8"/></svg>
        <svg class="ml-4 h-[19px] w-[19px]" viewBox="0 0 19 19"><defs><linearGradient id="shirt" x1="0" y1="0" x2=".6" y2="1"><stop stop-color="#ff6a45"/><stop offset=".5" stop-color="#a06cf0"/><stop offset="1" stop-color="#4fd0ff"/></linearGradient></defs><path d="M0 8l4-3q3 3 6 0l5 3-2 4-1-1v8H4v-8l-2 1z" fill="url(#shirt)"/><circle cx="14.500" cy="4" r="3.700" fill="#ff4f28" stroke="#fff"/></svg>
        <svg class="ml-[11px] size-4" viewBox="0 0 16 16" fill="none" stroke="#fff" stroke-width="1.500"><path d="M1 1h5v5H1zM1 10h5v5H1zM10 10h5v5h-5z"/><circle cx="12.500" cy="3.500" r="2.700"/></svg>
        <svg class="ml-[13px] h-5 w-[21px]" viewBox="0 0 21 20"><path d="M3 4l2-4 3 2h4l4-2 1 4q3 5 1 10-3 6-8 6T1.500 14Q-1 8 3 4z" fill="#f7f5f2"/><path d="M2 8q7-4 14-1l-2 4-5-.5L4 13z" fill="#f26a21"/><path d="M3 9.500h3v2H3zM10 8.500h2v1.500h-2z" fill="#222"/><path d="M8 15q3 1 5-2" fill="none" stroke="#333"/><path d="M18 5l1 2 2 .5-2 1-1 2-1-2-2-1 2-.5z" fill="#ffd83d"/></svg>
    </div>

    <button class="fixed bottom-[18px] right-[18px] grid size-5 place-items-center rounded-full bg-[#eee]" aria-label="弹出面板">
        <svg class="h-3 w-[14px]" viewBox="0 0 14 12" fill="none" stroke="#888" stroke-width="1.500"><path d="M1 4v7h8V5M5 1h8v7M4 7h3V4"/></svg>
    </button>
    <div class="pointer-events-none fixed bottom-3 right-1 whitespace-nowrap font-[Liberation_Sans,'Noto_Sans_CJK_SC',sans-serif] text-4xl font-light leading-10 text-[#e6e6e6]/80 [text-shadow:1px_1px_1px_#999]">CSDN @孤蓬&amp;听雨</div>

    <script>
        // one cell per 100px: a long tick, a label and the short ticks between
        const rulerX = document.getElementById('ruler-x');
        const rulerY = document.getElementById('ruler-y');

        let ticksX = '';
        let ticksY = '';
        for (let t = 10; t < 100; t += 10) {
            const size = t === 50 ? 9 : 4;
            ticksX += `M${t}.5 ${15 - size}v${size}`;
            ticksY += `M${15 - size} ${t}.5h${size}`;
        }

        const cols = Math.ceil(rulerX.clientWidth / 100);
        for (let i = 0; i < cols; i++) {
            rulerX.innerHTML += `<div class="relative w-[100px] shrink-0">
                <svg class="h-[15px] w-[100px]" stroke="#ccc"><path d="M.5 0v15${ticksX}"/></svg>
                <span class="absolute left-1 top-0 leading-[15px]">${i * 100}</span></div>`;
        }

        const rows = Math.ceil(rulerY.clientHeight / 100);
        for (let i = 0; i < rows; i++) {
            rulerY.innerHTML += `<div class="relative h-[100px]">
                <svg class="h-[100px] w-[15px]" stroke="#ccc"><path d="M0 .5h15${ticksY}"/></svg>
                <span class="absolute left-0 top-1 rotate-180 leading-[15px] [writing-mode:vertical-rl]">${i * 100}</span></div>`;
        }
    </script>
</body>
</html>
